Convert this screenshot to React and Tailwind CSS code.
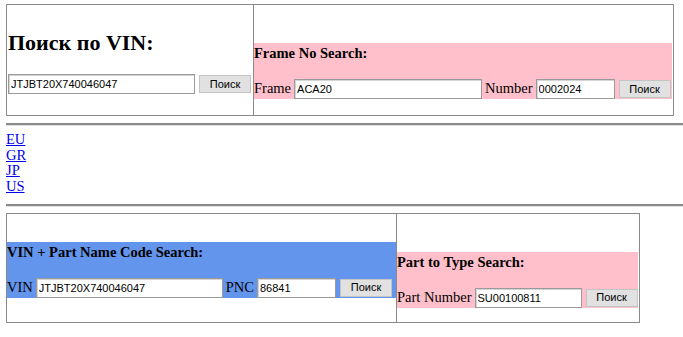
import React from 'react'

/* ───── общие элементы формы ───── */
function Field({ value, w }) {
  return (
    <input
      type="text"
      defaultValue={value}
      className={`${w} h-[20px] shrink-0 border border-[#9a9a9a] bg-white pl-[2px] font-['Liberation_Sans',Arial,sans-serif] text-[11px] text-black shadow-[inset_1px_1px_0_#d4d4d4] outline-none`}
    />
  )
}

function SearchButton({ className = '' }) {
  return (
    <button
      type="button"
      className={`h-[18px] w-[52px] shrink-0 border border-[#c4c4c4] bg-[#e1e1e1] font-['Liberation_Sans',Arial,sans-serif] text-[11px] leading-none text-black ${className}`}
    >
      Поиск
    </button>
  )
}

/* Блок-форма с заголовком (розовый / синий фон) */
function FormBand({ title, bg, children }) {
  return (
    <div className={`${bg} pt-[2px]`}>
      <div className="whitespace-nowrap text-[14.5px] font-bold leading-[17px]">{title}</div>
      <div className="mt-[17px] flex h-[20px] items-center gap-[3px] whitespace-nowrap">
        {children}
      </div>
    </div>
  )
}

function Rule() {
  return <div className="h-[3px] border-t-2 border-[#8a8a8a] bg-[#e0e0e0]" />
}

const regions = ['EU', 'GR', 'JP', 'US']

export default function App() {
  return (
    <div className="min-h-screen bg-white pl-[6px] pt-[4px] font-['Liberation_Serif','Times_New_Roman',serif] text-[14.5px] text-black">
      {/* Таблица 1: VIN + Frame */}
      <div className="flex h-[112px] w-[668px] border border-[#8a8a8a]">
        <div className="w-[247px] shrink-0 border-r border-[#8a8a8a] pl-[1px] pt-[25px]">
          <h2 className="whitespace-nowrap text-[22px] font-bold leading-[25px]">Поиск по VIN:</h2>
          <div className="mt-[19px] flex h-[20px] items-center gap-[4px]">
            <Field value="JTJBT20X740046047" w="w-[187px]" />
            <SearchButton />
          </div>
        </div>
        <div className="flex-1 pr-[1px] pt-[38px]">
          <FormBand title="Frame No Search:" bg="bg-[#ffc0cb]">
            <span>Frame</span>
            <Field value="ACA20" w="w-[188px]" />
            <span>Number</span>
            <Field value="0002024" w="w-[79px]" />
            <SearchButton className="ml-[1px]" />
          </FormBand>
        </div>
      </div>

      <div className="mt-[7px]">
        <Rule />
      </div>

      {/* Регионы */}
      <div className="mt-[6px] leading-[15.7px]">
        {regions.map(r => (
          <div key={r}>
            <a href="#" className="text-[#0000ee] underline">{r}</a>
          </div>
        ))}
      </div>

      <div className="mt-[9px]">
        <Rule />
      </div>

      {/* Таблица 2: PNC + Part to Type */}
      <div className="mt-[6px] flex h-[110px] w-[634px] border border-[#8a8a8a]">
        <div className="w-[390px] shrink-0 border-r border-[#8a8a8a] pt-[28px]">
          <FormBand title="VIN + Part Name Code Search:" bg="bg-[#6495ed]">
            <span>VIN</span>
            <Field value="JTJBT20X740046047" w="w-[187px]" />
            <span>PNC</span>
            <Field value="86841" w="w-[79px]" />
            <SearchButton className="ml-[1px]" />
          </FormBand>
        </div>
        <div className="flex-1 pr-[1px] pt-[38px]">
          <FormBand title="Part to Type Search:" bg="bg-[#ffc0cb]">
            <span>Part Number</span>
            <Field value="SU00100811" w="w-[107px]" />
            <SearchButton className="ml-[1px]" />
          </FormBand>
        </div>
      </div>
    </div>
  )
}
